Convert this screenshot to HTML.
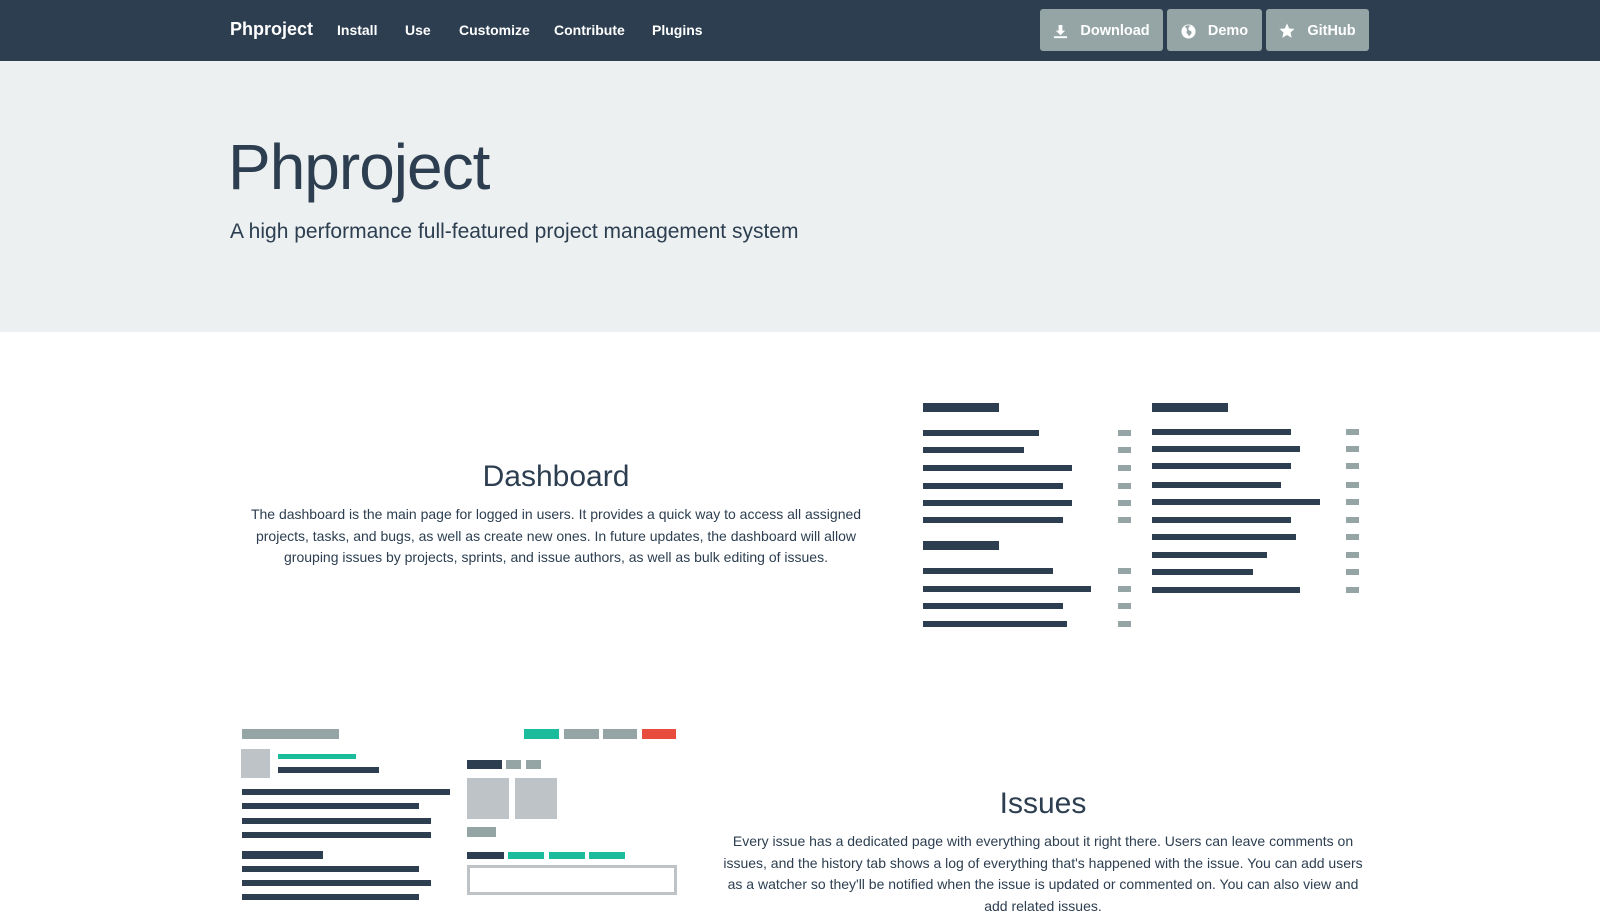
<!DOCTYPE html>
<html><head><meta charset="utf-8">
<style>
*{margin:0;padding:0;box-sizing:border-box}
body{width:1600px;height:900px;overflow:hidden;background:#fff;font-family:"Liberation Sans",sans-serif;color:#2c3e50;position:relative}
.nav{position:absolute;left:0;top:0;width:1600px;height:61px;background:#2c3e50}
.nav a{position:absolute;top:22px;color:#fff;font-size:14px;font-weight:bold;text-decoration:none}
.brand{font-size:18px!important;top:19px!important}
.btn{position:absolute;top:9px;height:42px;background:#95a5a6;border-radius:3px;color:#fff;font-size:14.5px;font-weight:bold;display:flex;align-items:center;justify-content:center;gap:12px;padding-top:2px}
.hero{position:absolute;left:0;top:61px;width:1600px;height:271px;background:#ecf0f1}
h1{position:absolute;left:228px;top:130px;font-size:64px;font-weight:normal;letter-spacing:-1px;color:#2c3e50}
.sub{position:absolute;left:230px;top:220px;font-size:21px;color:#2c3e50}
h2{position:absolute;font-size:30px;font-weight:normal;text-align:center}
p.t{position:absolute;font-size:14px;line-height:21.5px;text-align:center}
.b{position:absolute;background:#2c3e50}
.g{position:absolute;background:#95a5a6}
.l{position:absolute;background:#bdc3c7}
.tl{position:absolute;background:#1abc9c}
</style></head><body>
<div class="nav">
<a class="brand" style="left:230px">Phproject</a>
<a style="left:337px">Install</a>
<a style="left:405px">Use</a>
<a style="left:459px">Customize</a>
<a style="left:554px">Contribute</a>
<a style="left:652px">Plugins</a>
<div class="btn" style="left:1040px;width:123px"><svg width="15" height="15" viewBox="0 0 16 16"><path d="M6 1h4v6h3l-5 5-5-5h3z M1 13h14v2H1z" fill="#fff"/></svg>Download</div>
<div class="btn" style="left:1167px;width:95px"><svg width="15" height="15" viewBox="0 0 16 16"><circle cx="8" cy="8" r="7.5" fill="#fff"/><path d="M4 3c2 1 3 3 2 5s2 2 2 5c2-1 4-3 3-5s-3 0-3-3 2-2 2-3c-2-1-4-1-6 1z" fill="#95a5a6"/></svg>Demo</div>
<div class="btn" style="left:1266px;width:103px"><svg width="16" height="16" viewBox="0 0 16 16"><path d="M8 0.5l2.2 5 5.3.4-4 3.6 1.2 5.3L8 12l-4.7 2.8 1.2-5.3-4-3.6 5.3-.4z" fill="#fff"/></svg>GitHub</div>
</div>
<div class="hero"></div>
<h1>Phproject</h1>
<div class="sub">A high performance full-featured project management system</div>

<h2 style="left:256px;width:600px;top:460px">Dashboard</h2>
<p class="t" style="left:236px;width:640px;top:504px">The dashboard is the main page for logged in users. It provides a quick way to access all assigned projects, tasks, and bugs, as well as create new ones. In future updates, the dashboard will allow grouping issues by projects, sprints, and issue authors, as well as bulk editing of issues.</p>

<div class="b" style="left:923px;top:403px;width:76px;height:9px"></div>
<div class="b" style="left:923px;top:430px;width:116px;height:6px"></div>
<div class="b" style="left:923px;top:447px;width:101px;height:6px"></div>
<div class="b" style="left:923px;top:465px;width:149px;height:6px"></div>
<div class="b" style="left:923px;top:483px;width:140px;height:6px"></div>
<div class="b" style="left:923px;top:500px;width:149px;height:6px"></div>
<div class="b" style="left:923px;top:517px;width:140px;height:6px"></div>
<div class="b" style="left:923px;top:541px;width:76px;height:9px"></div>
<div class="b" style="left:923px;top:568px;width:130px;height:6px"></div>
<div class="b" style="left:923px;top:586px;width:168px;height:6px"></div>
<div class="b" style="left:923px;top:603px;width:140px;height:6px"></div>
<div class="b" style="left:923px;top:621px;width:144px;height:6px"></div>
<div class="g" style="left:1118px;top:430px;width:13px;height:6px"></div>
<div class="g" style="left:1118px;top:447px;width:13px;height:6px"></div>
<div class="g" style="left:1118px;top:465px;width:13px;height:6px"></div>
<div class="g" style="left:1118px;top:483px;width:13px;height:6px"></div>
<div class="g" style="left:1118px;top:500px;width:13px;height:6px"></div>
<div class="g" style="left:1118px;top:517px;width:13px;height:6px"></div>
<div class="g" style="left:1118px;top:568px;width:13px;height:6px"></div>
<div class="g" style="left:1118px;top:586px;width:13px;height:6px"></div>
<div class="g" style="left:1118px;top:603px;width:13px;height:6px"></div>
<div class="g" style="left:1118px;top:621px;width:13px;height:6px"></div>
<div class="b" style="left:1152px;top:403px;width:76px;height:9px"></div>
<div class="b" style="left:1152px;top:429px;width:139px;height:6px"></div>
<div class="b" style="left:1152px;top:446px;width:148px;height:6px"></div>
<div class="b" style="left:1152px;top:463px;width:139px;height:6px"></div>
<div class="b" style="left:1152px;top:482px;width:129px;height:6px"></div>
<div class="b" style="left:1152px;top:499px;width:168px;height:6px"></div>
<div class="b" style="left:1152px;top:517px;width:139px;height:6px"></div>
<div class="b" style="left:1152px;top:534px;width:144px;height:6px"></div>
<div class="b" style="left:1152px;top:552px;width:115px;height:6px"></div>
<div class="b" style="left:1152px;top:569px;width:101px;height:6px"></div>
<div class="b" style="left:1152px;top:587px;width:148px;height:6px"></div>
<div class="g" style="left:1346px;top:429px;width:13px;height:6px"></div>
<div class="g" style="left:1346px;top:446px;width:13px;height:6px"></div>
<div class="g" style="left:1346px;top:463px;width:13px;height:6px"></div>
<div class="g" style="left:1346px;top:482px;width:13px;height:6px"></div>
<div class="g" style="left:1346px;top:499px;width:13px;height:6px"></div>
<div class="g" style="left:1346px;top:517px;width:13px;height:6px"></div>
<div class="g" style="left:1346px;top:534px;width:13px;height:6px"></div>
<div class="g" style="left:1346px;top:552px;width:13px;height:6px"></div>
<div class="g" style="left:1346px;top:569px;width:13px;height:6px"></div>
<div class="g" style="left:1346px;top:587px;width:13px;height:6px"></div>

<h2 style="left:743px;width:600px;top:787px">Issues</h2>
<p class="t" style="left:718px;width:650px;top:831px">Every issue has a dedicated page with everything about it right there. Users can leave comments on issues, and the history tab shows a log of everything that's happened with the issue. You can add users as a watcher so they'll be notified when the issue is updated or commented on. You can also view and add related issues.</p>

<div class="g" style="left:242px;top:729px;width:97px;height:10px"></div>
<div class="l" style="left:241px;top:749px;width:29px;height:29px"></div>
<div class="tl" style="left:278px;top:754px;width:78px;height:5px"></div>
<div class="b" style="left:278px;top:767px;width:101px;height:6px"></div>
<div class="b" style="left:242px;top:789px;width:208px;height:6px"></div>
<div class="b" style="left:242px;top:803px;width:177px;height:6px"></div>
<div class="b" style="left:242px;top:818px;width:189px;height:6px"></div>
<div class="b" style="left:242px;top:832px;width:189px;height:6px"></div>
<div class="b" style="left:242px;top:851px;width:81px;height:8px"></div>
<div class="b" style="left:242px;top:866px;width:177px;height:6px"></div>
<div class="b" style="left:242px;top:880px;width:189px;height:6px"></div>
<div class="b" style="left:242px;top:894px;width:177px;height:6px"></div>
<div class="tl" style="left:524px;top:729px;width:35px;height:10px"></div>
<div class="g" style="left:564px;top:729px;width:35px;height:10px"></div>
<div class="g" style="left:603px;top:729px;width:34px;height:10px"></div>
<div style="position:absolute;left:642px;top:729px;width:34px;height:10px;background:#e74c3c"></div>
<div class="b" style="left:467px;top:760px;width:35px;height:9px"></div>
<div class="g" style="left:506px;top:760px;width:15px;height:9px"></div>
<div class="g" style="left:526px;top:760px;width:15px;height:9px"></div>
<div class="l" style="left:467px;top:778px;width:42px;height:41px"></div>
<div class="l" style="left:515px;top:778px;width:42px;height:41px"></div>
<div class="g" style="left:467px;top:827px;width:29px;height:10px"></div>
<div class="b" style="left:467px;top:852px;width:37px;height:7px"></div>
<div class="tl" style="left:508px;top:852px;width:36px;height:7px"></div>
<div class="tl" style="left:549px;top:852px;width:36px;height:7px"></div>
<div class="tl" style="left:589px;top:852px;width:36px;height:7px"></div>
<div style="position:absolute;left:467px;top:865px;width:210px;height:30px;border:3px solid #bdc3c7"></div>
</body></html>
